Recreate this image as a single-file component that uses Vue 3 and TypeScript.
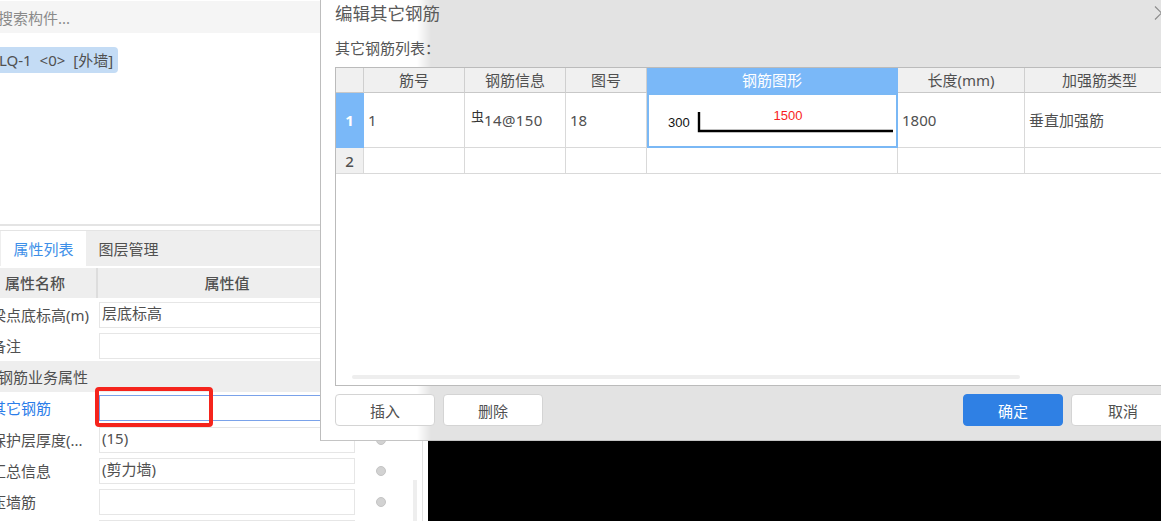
<script setup lang="ts">
interface PropRow {
  label: string
  value?: string
  kind?: 'section' | 'active'
}

const rows: PropRow[] = [
  { label: '梁点底标高(m)', value: '层底标高' },
  { label: '备注', value: '' },
  { label: '钢筋业务属性', kind: 'section' },
  { label: '其它钢筋', value: '', kind: 'active' },
  { label: '保护层厚度(...', value: '(15)' },
  { label: '汇总信息', value: '(剪力墙)' },
  { label: '压墙筋', value: '' },
  { label: '', value: '' }
]

const heads = ['', '筋号', '钢筋信息', '图号', '钢筋图形', '长度(mm)', '加强筋类型']
</script>

<template>
  <div class="page">
    <aside class="side">
      <div class="search"><span>搜索构件...</span></div>
      <div class="tree">
        <div class="chip"><span>LQ-1 &lt;0&gt; [外墙]</span></div>
      </div>
      <div class="tabs">
        <div class="tab on">属性列表</div>
        <div class="tab">图层管理</div>
      </div>
      <div class="prop-head">
        <div class="ph-name">属性名称</div>
        <div class="ph-value">属性值</div>
      </div>
      <template v-for="(r, i) in rows" :key="i">
        <div v-if="r.kind === 'section'" class="section"><span>{{ r.label }}</span></div>
        <div v-else class="row" :class="{ active: r.kind === 'active' }">
          <div class="label"><span>{{ r.label }}</span></div>
          <div class="input">{{ r.value }}</div>
          <i class="dot"></i>
          <b v-if="r.kind === 'active'" class="mark"></b>
        </div>
      </template>
      <i class="vbar"></i>
    </aside>
    <main class="canvas"></main>

    <section class="dialog">
      <h1 class="title">编辑其它钢筋</h1>
      <svg class="close" width="12" height="16" viewBox="0 0 12 16">
        <path d="M1 1.5 7.5 8 1 14.5" fill="none" stroke="#8c8c8c" stroke-width="1.2" />
      </svg>
      <div class="caption">其它钢筋列表：</div>
      <div class="grid-box">
        <div class="grid">
          <div
            v-for="(h, i) in heads"
            :key="'h' + i"
            class="hd"
            :class="{ sel: i === 4 }"
          >{{ h }}</div>

          <div class="num sel">1</div>
          <div class="cell">1</div>
          <div class="cell"><span class="rebar">虫</span><span class="spec">14@150</span></div>
          <div class="cell">18</div>
          <div class="cell shape">
            <svg width="251" height="55" viewBox="0 0 251 55">
              <text x="21" y="34" class="t300">300</text>
              <text x="141" y="27" class="t1500" text-anchor="middle">1500</text>
              <path d="M52 19V38H246" fill="none" stroke="#000" stroke-width="2.4" />
            </svg>
          </div>
          <div class="cell">1800</div>
          <div class="cell">垂直加强筋</div>

          <div class="num low">2</div>
          <div v-for="n in 6" :key="'e' + n" class="cell low"></div>
        </div>
        <i class="hbar"></i>
      </div>
      <footer class="foot">
        <button class="btn">插入</button>
        <button class="btn">删除</button>
        <button class="btn primary">确定</button>
        <button class="btn wide">取消</button>
      </footer>
    </section>
  </div>
</template>

<style>
html, body { margin: 0; background: #000; }
</style>

<style scoped>
.page {
  position: relative;
  display: flex;
  width: 1161px;
  height: 521px;
  overflow: hidden;
  background: #000;
  color: #505050;
  font: 15px/1.2 "Noto Sans", "Noto Sans CJK SC", sans-serif;
}
.side {
  position: relative;
  display: flex;
  flex-direction: column;
  flex: none;
  box-sizing: border-box;
  width: 428px;
  height: 521px;
  overflow: hidden;
  background: #fff;
}
.side > * { flex: none; }
.search {
  display: flex;
  align-items: center;
  height: 32px;
  margin-top: 1px;
  padding-top: 1px;
  box-sizing: border-box;
  background: #f5f5f5;
  color: #8a8a8a;
  overflow: hidden;
}
.search span { margin-left: -2px; white-space: nowrap; }
.tree {
  box-sizing: border-box;
  height: 193px;
  padding-top: 14px;
  border-bottom: 2px solid #e4e4e4;
  margin-right: 5px;
}
.chip {
  display: flex;
  align-items: center;
  width: 118px;
  height: 26px;
  box-sizing: border-box;
  overflow: hidden;
  border-radius: 0 4px 4px 0;
  background: #c4dcf5;
  white-space: nowrap;
  word-spacing: 4px;
}
.chip span { margin-left: -1px; }
.tabs {
  display: flex;
  height: 36px;
  margin: 4px 5px 0 0;
  border-top: 1px solid #e4e4e4;
  box-sizing: border-box;
  background: #eee;
}
.tab {
  box-sizing: border-box;
  width: 85px;
  padding-top: 9px;
  text-align: center;
}
.tab.on { margin-left: 1px; background: #fff; color: #3d8fe8; }
.prop-head {
  display: flex;
  height: 30px;
  margin: 2px 5px 1px 0;
  background: #eee;
  font-weight: 500;
}
.ph-name {
  box-sizing: border-box;
  width: 98px;
  padding: 6px 0 0 5px;
  border-right: 2px solid #ddd;
}
.ph-value {
  box-sizing: border-box;
  width: 258px;
  padding-top: 6px;
  text-align: center;
}
.row {
  position: relative;
  display: flex;
  align-items: center;
  height: 31px;
}
.row.active { height: 32px; }
.label {
  width: 99px;
  flex: none;
  overflow: hidden;
  white-space: nowrap;
}
.label span { display: block; margin-left: -9px; }
.active .label { color: #2b7de9; }
.input {
  flex: none;
  box-sizing: border-box;
  width: 256px;
  height: 26px;
  padding: 1px 2px;
  border: 1px solid #e6e6e6;
  background: #fff;
}
.active .input { border-color: #7aa2ea; }
.dot {
  width: 10px;
  height: 10px;
  margin-left: 21px;
  border: 1px solid #c4c4c4;
  box-sizing: border-box;
  border-radius: 50%;
  background: #d2d2d2;
}
.mark {
  position: absolute;
  left: 95px;
  top: -5px;
  box-sizing: border-box;
  width: 118px;
  height: 40px;
  border: 4px solid #f5241c;
  border-radius: 4px;
}
.section {
  display: flex;
  align-items: center;
  height: 31px;
  margin-right: 73px;
  overflow: hidden;
  background: #eee;
  white-space: nowrap;
}
.section span { margin-left: -2px; }
.vbar {
  position: absolute;
  left: 413px;
  top: 480px;
  width: 4px;
  height: 41px;
  background: #eee;
}
.side::after {
  content: "";
  position: absolute;
  left: 422px;
  top: 226px;
  width: 1px;
  bottom: 0;
  background: #e2e2e2;
}
.canvas { flex: 1; background: #000; }

.dialog {
  position: absolute;
  left: 320px;
  top: 0;
  box-sizing: border-box;
  width: 860px;
  height: 441px;
  padding-left: 14px;
  border-left: 1px solid #bdbdbd;
  border-bottom: 1px solid #c4c4c4;
  background: linear-gradient(90deg, #fff 0, #fff 96px, #e3e3e3 110px);
}
.title {
  height: 26px;
  margin: 0;
  font-size: 17.5px;
  font-weight: 400;
  line-height: 26px;
  color: #5a5a5a;
}
.close { position: absolute; left: 833px; top: 5px; }
.caption {
  box-sizing: border-box;
  height: 41px;
  padding-top: 13px;
  color: #555;
}
.grid-box {
  position: relative;
  box-sizing: border-box;
  width: 840px;
  height: 319px;
  border: 1px solid #bbb;
  background: #fff;
}
.grid {
  display: grid;
  grid-template-columns: 28px 101px 101px 81px 251px 127px 150px;
  grid-template-rows: 25px 55px 26px;
}
.hd, .num, .cell {
  box-sizing: border-box;
  display: flex;
  align-items: center;
  border-right: 1px solid #d9d9d9;
  border-bottom: 1px solid #d9d9d9;
  white-space: nowrap;
}
.hd {
  justify-content: center;
  background: #f0f0f0;
  border-bottom-color: #c8c8c8;
  border-right-color: #cfcfcf;
}
.hd.sel { background: #7ab8f8; color: #fff; border-color: #7ab8f8; }
.num {
  justify-content: center;
  background: #f0f0f0;
  font-weight: 500;
}
.num.sel { background: #7ab8f8; color: #fff; border-color: #7ab8f8; font-weight: 700; }
.cell { padding-left: 4px; }
.rebar {
  margin: -8px 0 0 2px;
  color: #333;
  font-size: 13px;
  line-height: 1;
}
.spec { letter-spacing: 0.4px; }
.cell.shape {
  padding: 0;
  border: none;
  box-shadow: inset 0 0 0 2px #7ab8f5;
}
.cell.shape svg { display: block; }
.t300 { font: 13px "Liberation Sans", sans-serif; fill: #111; }
.t1500 { font: 13px "Liberation Sans", sans-serif; fill: #f81e1e; }
.hbar {
  position: absolute;
  left: 16px;
  top: 307px;
  width: 668px;
  height: 4px;
  border-radius: 2px;
  background: #eee;
}
.foot {
  display: flex;
  gap: 8px;
  width: 840px;
  margin-top: 8px;
}
.btn {
  box-sizing: border-box;
  width: 100px;
  height: 32px;
  padding: 0;
  border: 1px solid #d4d4d4;
  border-radius: 4px;
  background: #fff;
  color: #505050;
  font: 15px "Noto Sans", "Noto Sans CJK SC", sans-serif;
}
.btn.primary {
  margin-left: auto;
  border-color: #2f80e4;
  background: #2f80e4;
  color: #fff;
}
.btn.wide { width: 104px; }
</style>
